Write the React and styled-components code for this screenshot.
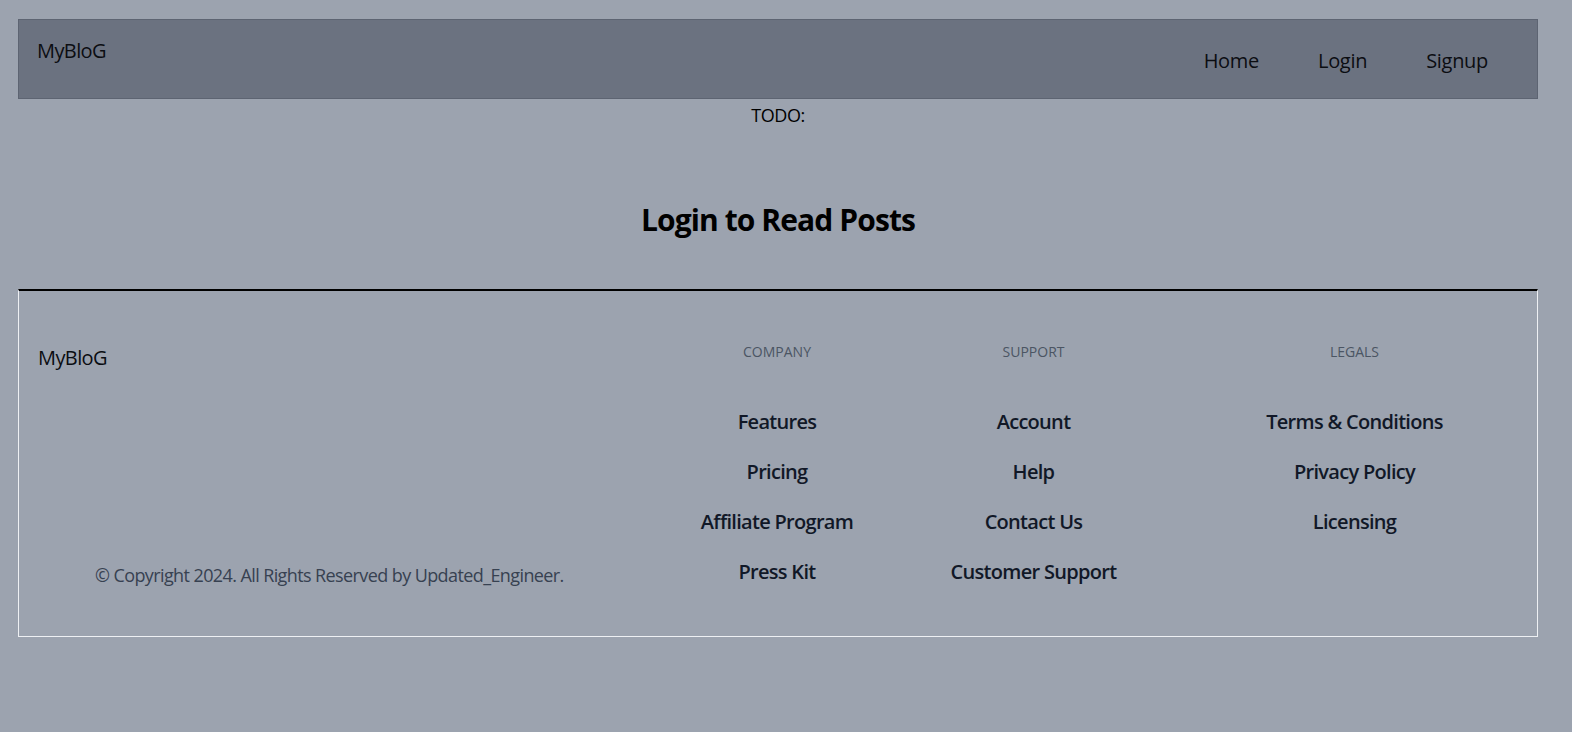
import React from 'react'
import styled, { createGlobalStyle } from 'styled-components'

const GlobalStyle = createGlobalStyle`
  html, body {
    margin: 0;
    padding: 0;
    background-color: #9ca3af;
    font-family: "Open Sans", "Noto Sans", sans-serif;
    color: #000;
  }
`

const company = ['Features', 'Pricing', 'Affiliate Program', 'Press Kit']
const support = ['Account', 'Help', 'Contact Us', 'Customer Support']
const legals = ['Terms & Conditions', 'Privacy Policy', 'Licensing']

const App = () => {
  return (
    <Page>
      <GlobalStyle />

      <Navbar>
        <Brand>MyBloG</Brand>
        <NavLinks>
          <NavLink>Home</NavLink>
          <NavLink>Login</NavLink>
          <NavLink>Signup</NavLink>
        </NavLinks>
      </Navbar>

      <Todo>TODO:</Todo>
      <Heading>Login to Read Posts</Heading>

      <Footer>
        <Left>
          <FooterBrand>MyBloG</FooterBrand>
          <Copyright>© Copyright 2024. All Rights Reserved by Updated_Engineer.</Copyright>
        </Left>

        <Column width="250px">
          <ColumnTitle>Company</ColumnTitle>
          <LinkList>
            {company.map(item => <FooterLink key={item}>{item}</FooterLink>)}
          </LinkList>
        </Column>

        <Column width="263px">
          <ColumnTitle>Support</ColumnTitle>
          <LinkList>
            {support.map(item => <FooterLink key={item}>{item}</FooterLink>)}
          </LinkList>
        </Column>

        <Column width="372px" offset="7px">
          <ColumnTitle>Legals</ColumnTitle>
          <LinkList>
            {legals.map(item => <FooterLink key={item}>{item}</FooterLink>)}
          </LinkList>
        </Column>
      </Footer>
    </Page>
  )
}

export default App

const Page = styled.div`
  min-height: 732px;
  padding: 19px 34px 0 18px;
  box-sizing: border-box;
`

const Navbar = styled.nav`
  height: 80px;
  box-sizing: border-box;
  background-color: #6b7280;
  border: 1px solid #5d6472;
  display: flex;
  justify-content: space-between;
  align-items: center;
  padding: 3px 49px 0 18px;
`

const Brand = styled.div`
  align-self: flex-start;
  margin-top: 14px;
  font-size: 20px;
  line-height: 28px;
  letter-spacing: -0.6px;
  color: #0b0d12;
`

const NavLinks = styled.ul`
  list-style: none;
  margin: 0;
  padding: 0;
  display: flex;
  align-items: center;
  gap: 59px;
`

const NavLink = styled.li`
  font-size: 20px;
  line-height: 28px;
  letter-spacing: -0.3px;
  color: #0b0d12;
  cursor: pointer;
`

const Todo = styled.div`
  margin-top: 3px;
  text-align: center;
  font-size: 18px;
  line-height: 27px;
  letter-spacing: -0.4px;
  color: #000;
`

const Heading = styled.h1`
  margin: 73px 0 0;
  text-align: center;
  font-size: 30px;
  line-height: 36px;
  font-weight: 700;
  letter-spacing: -0.9px;
  color: #000;
`

const Footer = styled.footer`
  margin-top: 51px;
  display: flex;
  border: 1px solid #eef0f3;
  border-top: 2px solid #000;
  padding: 51px 0 50px;
`

const Left = styled.div`
  flex: 0 0 633px;
  display: flex;
  flex-direction: column;
  justify-content: space-between;
  padding-left: 19px;
  box-sizing: border-box;
`

const FooterBrand = styled.div`
  margin-top: 2px;
  font-size: 20px;
  line-height: 28px;
  letter-spacing: -0.6px;
  color: #0b0d12;
`

const Copyright = styled.p`
  margin: 0 0 -2px 57px;
  font-size: 18px;
  line-height: 26px;
  letter-spacing: -0.6px;
  color: #374151;
`

const Column = styled.div`
  flex: 0 0 ${props => props.width};
  box-sizing: border-box;
  padding-left: ${props => props.offset || '0px'};
  display: flex;
  flex-direction: column;
  align-items: center;
`

const ColumnTitle = styled.h3`
  margin: 0;
  font-size: 14px;
  line-height: 20px;
  font-weight: 400;
  letter-spacing: 0;
  text-transform: uppercase;
  color: #4b5563;
`

const LinkList = styled.ul`
  list-style: none;
  margin: 46px 0 0;
  padding: 0;
  display: flex;
  flex-direction: column;
  align-items: center;
  gap: 22px;
`

const FooterLink = styled.li`
  font-size: 20px;
  line-height: 28px;
  font-weight: 600;
  letter-spacing: -0.7px;
  color: #111827;
  cursor: pointer;
`
